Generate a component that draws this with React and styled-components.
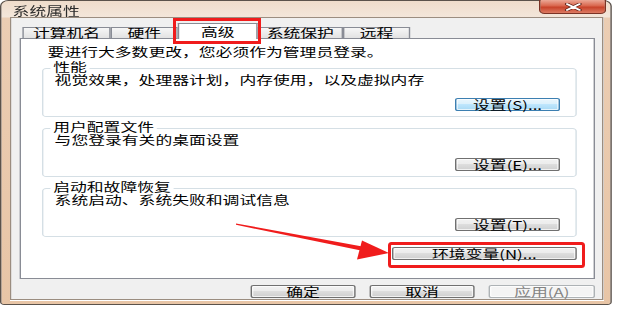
import React from 'react';
import styled, { createGlobalStyle } from 'styled-components';

const GlobalStyle = createGlobalStyle`
  html, body {
    margin: 0;
    padding: 0;
    background: #fff;
  }
  body {
    font-family: "Noto Sans CJK SC", "Liberation Sans", sans-serif;
    color: #000;
  }
`;

const Stage = styled.div`
  position: relative;
  width: 620px;
  height: 309px;
  overflow: hidden;
  background: #fff;
`;

// the screenshot is stretched sideways, so the dialog is drawn narrow and widened
const Stretch = styled.div`
  width: 437px;
  transform: scaleX(1.4);
  transform-origin: 0 0;
`;

const Window = styled.div`
  box-sizing: border-box;
  width: 437px;
  height: 305px;
  border: 1px solid #5b524b;
  border-radius: 6px 6px 3px 3px;
  background: linear-gradient(#efdccb 0, #f3e6da 16px, #ebcdb3 17px, #e8c5a6 100%);
  display: flex;
  flex-direction: column;
`;

const TitleBar = styled.div`
  height: 16px;
  display: flex;
  justify-content: space-between;
  align-items: flex-start;
  padding-left: 8px;
`;

const Title = styled.div`
  font-size: 12px;
  line-height: 12px;
  padding-top: 4px;
  color: #2a2a2a;
`;

const CloseButton = styled.div`
  box-sizing: border-box;
  width: 48px;
  height: 14px;
  margin-right: 3px;
  margin-top: -1px;
  border: 1px solid #7a3325;
  border-top: none;
  border-radius: 0 0 4px 4px;
  background: linear-gradient(#eba896 0%, #d9664d 45%, #c8432a 55%, #dc7a62 100%);
  display: flex;
  align-items: center;
  justify-content: center;
`;

const Client = styled.div`
  flex: 1;
  margin: 0 5px 4px 6px;
  border: 1px solid #9b8d80;
  background: #f0f0f0;
  padding: 5px 5px 0 6px;
  display: flex;
  flex-direction: column;
`;

const TabRow = styled.div`
  height: 16px;
  display: flex;
  align-items: flex-end;
  padding-left: 2px;
  margin-bottom: -1px;
  position: relative;
  z-index: 1;
`;

const Tab = styled.div`
  box-sizing: border-box;
  width: ${p => p.$w}px;
  height: ${p => (p.$active ? 16 : 12)}px;
  border: 1px solid #898c95;
  border-bottom: ${p => (p.$active ? 'none' : '1px solid #898c95')};
  background: ${p => (p.$active ? '#fff' : 'linear-gradient(#f6f6f6, #e2e2e2)')};
  font-size: 12px;
  line-height: ${p => (p.$active ? 11 : 10)}px;
  padding-top: ${p => (p.$active ? 2 : 0)}px;
  text-align: center;
  white-space: nowrap;
`;

const Panel = styled.div`
  box-sizing: border-box;
  height: 241px;
  border: 1px solid #898c95;
  background: #fff;
  padding: 7px 12px 0 15px;
  display: flex;
  flex-direction: column;
`;

const Intro = styled.div`
  font-size: 12px;
  line-height: 12px;
  margin-left: 4px;
  white-space: nowrap;
`;

const Group = styled.section`
  margin-top: ${p => (p.$first ? 10 : 11)}px;
  padding: 0 11px 5px 8px;
  border: 1px solid #d5dfe5;
  border-radius: 3px;
  display: flex;
  flex-direction: column;
`;

// caption sits on the top border line, like a group box legend
const GroupTitle = styled.div`
  align-self: flex-start;
  margin: -8px 0 1px -3px;
  padding: 0 2px;
  background: #fff;
  font-size: 12px;
  line-height: 12px;
  white-space: nowrap;
`;

const Desc = styled.div`
  font-size: 12px;
  line-height: 12px;
  white-space: nowrap;
`;

const ButtonRow = styled.div`
  display: flex;
  justify-content: flex-end;
  gap: 10px;
  margin-top: ${p => p.$top}px;
`;

const Button = styled.div`
  box-sizing: border-box;
  width: ${p => p.$w}px;
  height: 13px;
  border: 1px solid ${p => (p.$focus ? '#3c7fb1' : p.$disabled ? '#adb2b5' : '#707070')};
  border-radius: 2px;
  background: ${p =>
    p.$disabled
      ? '#f4f4f4'
      : p.$focus
      ? 'linear-gradient(#eaf6fd 0%, #d9f0fc 50%, #bee6fd 50%, #a7d9f5 100%)'
      : 'linear-gradient(#f2f2f2 0%, #ebebeb 50%, #dddddd 50%, #cfcfcf 100%)'};
  box-shadow: inset 0 0 0 1px rgba(255, 255, 255, 0.7);
  color: ${p => (p.$disabled ? '#838383' : '#000')};
  font-size: 12px;
  line-height: 11px;
  text-align: center;
  white-space: nowrap;
`;

const Overlay = styled.svg`
  position: absolute;
  left: 0;
  top: 0;
  pointer-events: none;
`;

const tabs = [
  { label: '计算机名', w: 63 },
  { label: '硬件', w: 48 },
  { label: '高级', w: 57, active: true },
  { label: '系统保护', w: 61 },
  { label: '远程', w: 48 },
];

const groups = [
  { title: '性能', desc: '视觉效果，处理器计划，内存使用，以及虚拟内存', button: '设置(S)...', focus: true },
  { title: '用户配置文件', desc: '与您登录有关的桌面设置', button: '设置(E)...' },
  { title: '启动和故障恢复', desc: '系统启动、系统失败和调试信息', button: '设置(T)...' },
];

const CloseGlyph = () => (
  <svg width="13" height="8" viewBox="0 0 13 8">
    <path d="M2 1 L11 7 M11 1 L2 7" stroke="#5a1e14" strokeWidth="3" strokeLinecap="round" />
    <path d="M2 1 L11 7 M11 1 L2 7" stroke="#fff" strokeWidth="1.6" strokeLinecap="round" />
  </svg>
);

export default function App() {
  return (
    <Stage>
      <GlobalStyle />
      <Stretch>
        <Window>
          <TitleBar>
            <Title>系统属性</Title>
            <CloseButton>
              <CloseGlyph />
            </CloseButton>
          </TitleBar>
          <Client>
            <TabRow>
              {tabs.map(t => (
                <Tab key={t.label} $w={t.w} $active={t.active}>
                  {t.label}
                </Tab>
              ))}
            </TabRow>
            <Panel>
              <Intro>要进行大多数更改，您必须作为管理员登录。</Intro>
              {groups.map((g, i) => (
                <Group key={g.title} $first={i === 0}>
                  <GroupTitle>{g.title}</GroupTitle>
                  <Desc>{g.desc}</Desc>
                  <ButtonRow $top={12}>
                    <Button $w={75} $focus={g.focus}>{g.button}</Button>
                  </ButtonRow>
                </Group>
              ))}
              <ButtonRow $top={10}>
                <Button $w={132}>环境变量(N)...</Button>
              </ButtonRow>
            </Panel>
            <ButtonRow $top={6}>
              <Button $w={75}>确定</Button>
              <Button $w={75}>取消</Button>
              <Button $w={76} $disabled>应用(A)</Button>
            </ButtonRow>
          </Client>
        </Window>
      </Stretch>
      <Overlay width="620" height="309" viewBox="0 0 620 309">
        <rect x="174.5" y="19.5" width="85" height="23" fill="none" stroke="#f01c1c" strokeWidth="3" />
        <rect x="389.5" y="243.5" width="194" height="23" rx="2" fill="none" stroke="#f01c1c" strokeWidth="3" />
        <polygon points="236,223.4 236,224.8 361,250.6 361,246.2" fill="#f01c1c" />
        <polygon points="362,240.5 389,253 357,259.5" fill="#f01c1c" />
      </Overlay>
    </Stage>
  );
}
